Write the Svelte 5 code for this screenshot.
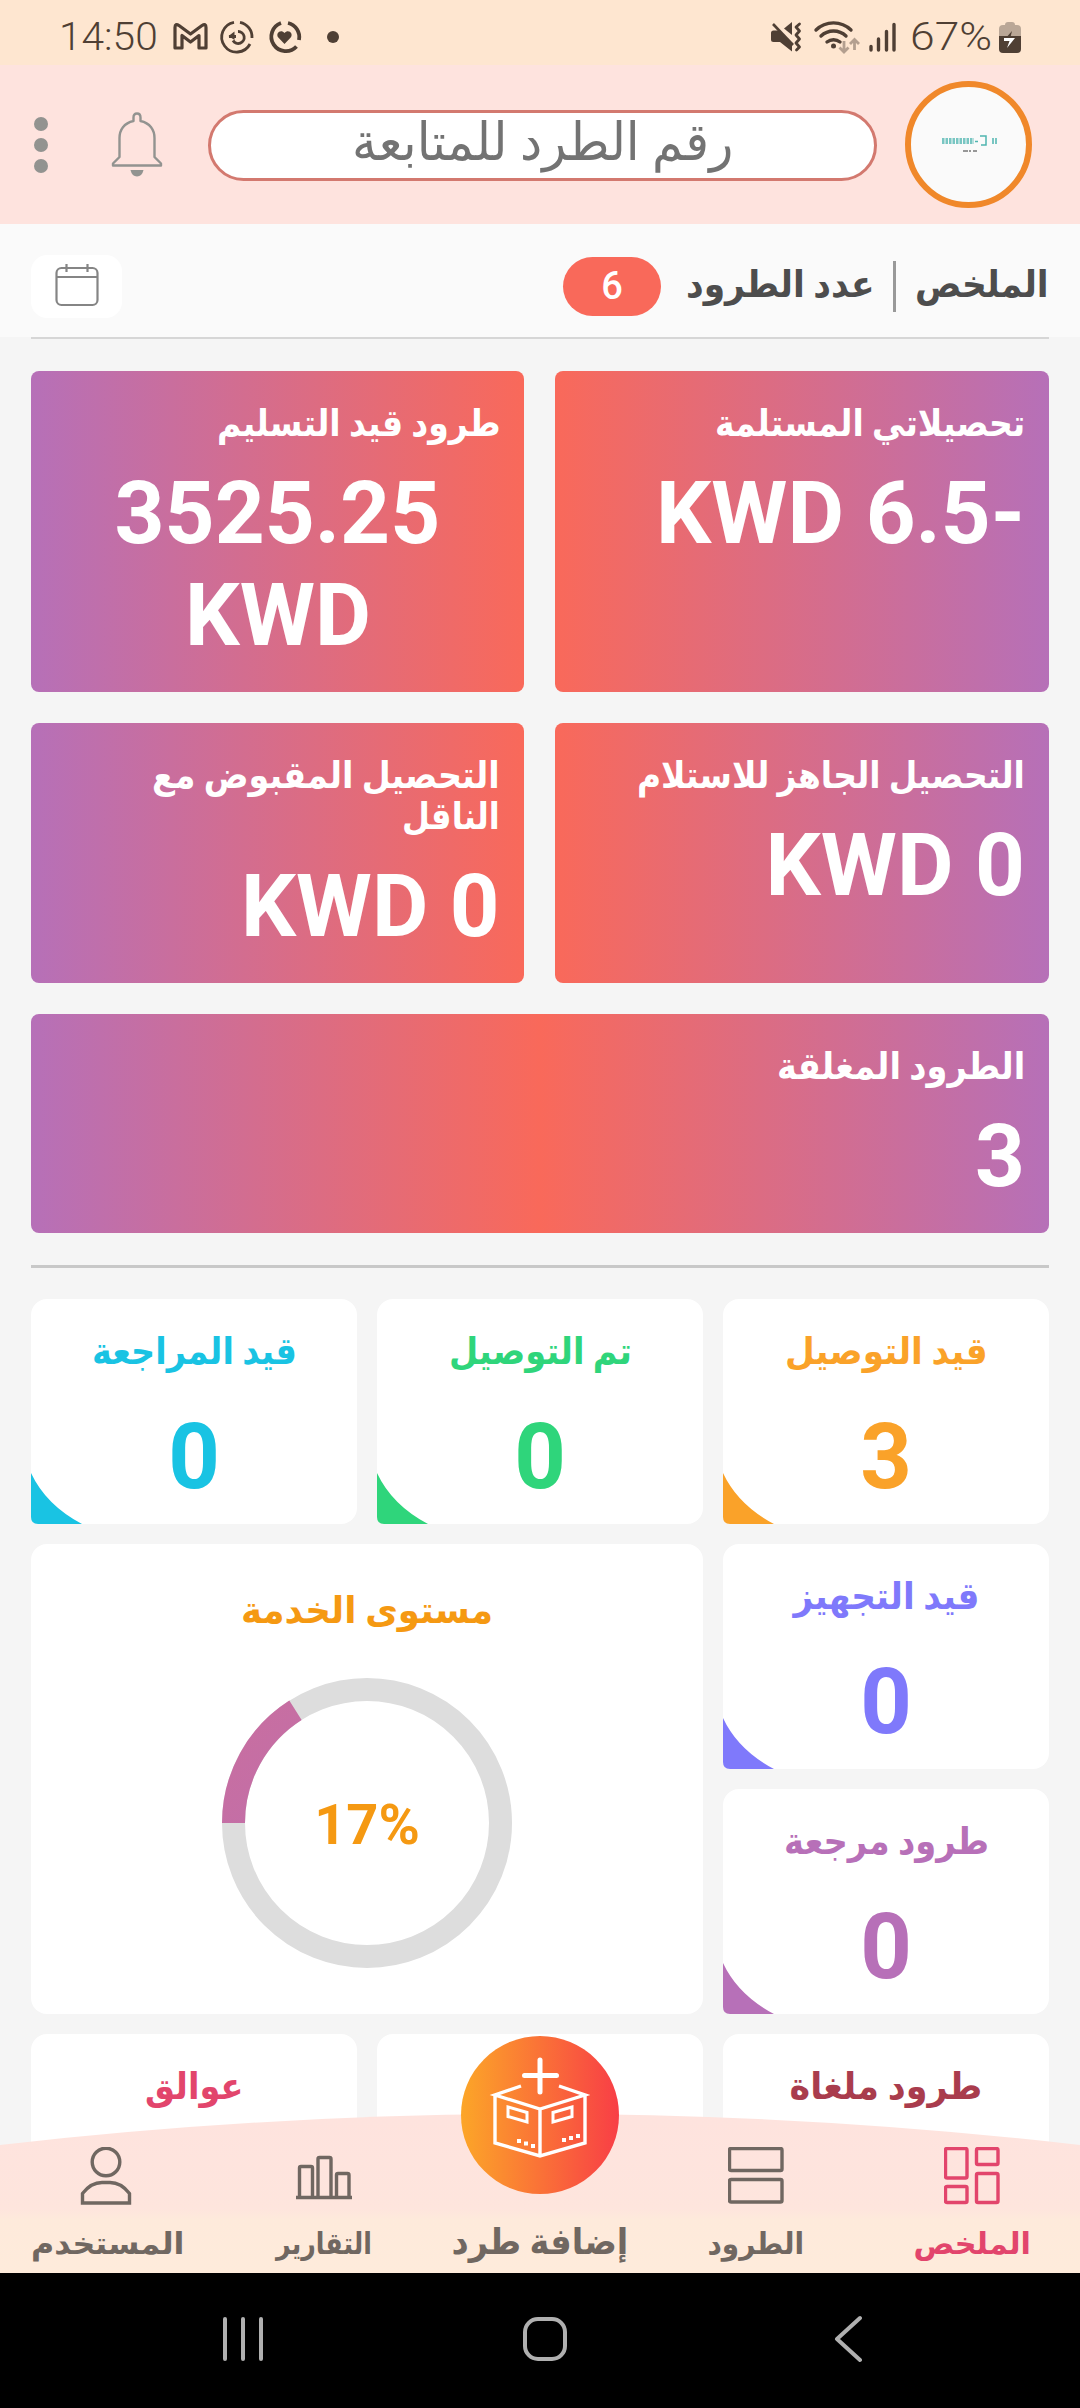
<script>
  const gradientCards = [
    { id: 'received', side: 'right', title: [['تحصيلاتي المستلمة', 310]], value: [['-6.5 KWD', 369]] },
    { id: 'delivering', side: 'left', title: [['طرود قيد التسليم', 284]], value: [['3525.25', 326], ['KWD', 186]] },
    { id: 'ready', side: 'right', title: [['التحصيل الجاهز للاستلام', 388]], value: [['0 KWD', 260]] },
    { id: 'carrier', side: 'left', title: [['التحصيل المقبوض مع', 348], ['الناقل', 98]], value: [['0 KWD', 259]] },
    { id: 'closed', side: 'full', title: [['الطرود المغلقة', 248]], value: [['3', 50]] }
  ];

  const statusCards = [
    { id: 'shipping', title: 'قيد التوصيل', width: 203, value: '3', color: '#faa229' },
    { id: 'delivered', title: 'تم التوصيل', width: 183, value: '0', color: '#2fd57b' },
    { id: 'review', title: 'قيد المراجعة', width: 205, value: '0', color: '#19c3e3' },
    { id: 'preparing', title: 'قيد التجهيز', width: 186, value: '0', color: '#7f79fb' },
    { id: 'returned', title: 'طرود مرجعة', width: 205, value: '0', color: '#b770b8' },
    { id: 'cancelled', title: 'طرود ملغاة', width: 193, value: '', color: '#a93c4d' },
    { id: 'empty', title: '', width: 0, value: '', color: '#ffffff' },
    { id: 'pending', title: 'عوالق', width: 98, value: '', color: '#e2456c' }
  ];

  const tabs = [
    { id: 'summary', label: 'الملخص', width: 117 },
    { id: 'parcels', label: 'الطرود', width: 96 },
    { id: 'add', label: 'إضافة طرد', width: 177 },
    { id: 'reports', label: 'التقارير', width: 96 },
    { id: 'user', label: 'المستخدم', width: 153 }
  ];

  let active = 'summary';
  const serviceLevel = 17;
  const arc = 16;

  // squeeze or stretch a label to its designed width
  function fit(node, width) {
    if (width) {
      node.style.transform = `scaleX(${width / node.offsetWidth})`;
    }
  }
</script>

<div class="screen">
  <div class="statusbar">
    <div class="status-left">
      <div class="clock"><span use:fit={99}>14:50</span></div>
      <svg width="170" height="40" viewBox="170 17 170 40" fill="none" stroke="#4f3f34">
        <path d="M175 48V27.500Q175 23 179 25.500L190.500 34L202 25.500Q206 23 206 27.500V48H199V35.500L190.500 42L182 35.500V48Z" stroke-width="3.200" stroke-linejoin="round" />
        <g stroke-width="2.800">
          <path d="M240 22.300A15 15 0 0 1 252 38" />
          <path d="M250 44A15 15 0 1 1 234 22.300" />
          <path d="M238 31.500A6 6 0 1 1 233 40.500M229 36.500H236" />
          <path d="M228.500 36L234.500 31.500V40Z" fill="#4f3f34" stroke="none" />
        </g>
        <g stroke-width="3.800">
          <path d="M288 23A14.500 14.500 0 0 1 299 40" />
          <path d="M296.500 46.500A14.500 14.500 0 1 1 281 23" />
        </g>
        <path d="M284.500 44L278.300 37.500C275 33 281 28.500 284.500 33C288 28.500 294 33 290.700 37.500Z" fill="#4f3f34" stroke="none" />
        <circle cx="333" cy="37" r="6" fill="#4f3f34" stroke="none" />
      </svg>
    </div>
    <div class="status-right">
      <svg width="132" height="40" viewBox="768 17 132 40" fill="none" stroke="#4f3f34">
        <path d="M772 33Q772 30.500 774.500 30.500H780L793 44V51.500L781 42H774.500Q772 42 772 39.500Z" fill="#4f3f34" stroke="none" />
        <path d="M793 22V35L785 28.500Z" fill="#4f3f34" stroke="none" />
        <path d="M774 24L794 45" stroke-width="2.600" />
        <path d="M800.500 24L797 27L800.500 31L797 35L800.500 39L797 43L800.500 47L797.500 50" stroke-width="2.800" stroke-linejoin="round" stroke-linecap="round" />
        <path d="M817 30A25 25 0 0 1 852 30M822 36A18 18 0 0 1 847 36M828 42A10.500 10.500 0 0 1 841 42" stroke-width="3.400" stroke-linecap="round" />
        <circle cx="834.500" cy="46" r="2.500" fill="#4f3f34" stroke="none" />
        <path d="M845 41V51M840.500 47.500L845 52L849.500 47.500M855.500 50V39.500M851 44L855.500 39.500L860 44" stroke="#b39f8f" stroke-width="2.800" />
        <path d="M872 46.500V50M879.500 39V50M887.500 31.500V50M895 24.500V50" stroke-width="3.400" stroke-linecap="round" />
      </svg>
      <div class="percent"><span use:fit={82}>67%</span></div>
      <svg width="22" height="32" viewBox="0 0 22 32">
        <path d="M6 3Q6 0 9 0H13Q16 0 16 3H18Q22 3 22 7V15H0V7Q0 3 4 3Z" fill="#baa797" />
        <path d="M0 14H22V27Q22 31 18 31H4Q0 31 0 27Z" fill="#4f3f34" />
        <path d="M13 9L6 17H11Z" fill="#4f3f34" />
        <path d="M5 16H16L8 26L10.500 19H5Z" fill="#fff" />
      </svg>
    </div>
  </div>

  <header>
    <button class="dots" aria-label="القائمة"><i></i><i></i><i></i></button>
    <button class="bell" aria-label="الإشعارات">
      <svg width="52" height="68" viewBox="0 0 52 68" fill="none" stroke="#929390" stroke-width="2.400" stroke-linejoin="round">
        <path d="M22.500 9V5.500Q22.500 1.500 26 1.500T29.500 5.500V9C39 11 43.500 18 43.500 26V45L50 51.500V53.500H2V51.500L8.500 45V26C8.500 18 13 11 22.500 9Z" />
        <path d="M19.500 58H32.500Q31 64.500 26 64.500T19.500 58Z" fill="#929390" stroke="none" />
      </svg>
    </button>
    <div class="search"><span use:fit={381}>رقم الطرد للمتابعة</span></div>
    <div class="avatar">
      <svg width="60" height="22" viewBox="0 0 60 22">
        <path d="M3 7H35" stroke="#4fb5b0" stroke-width="6" stroke-dasharray="2.500 1" opacity=".75" />
        <path d="M36 7.500H39M41 2H47V11H42M54 4V10M57 4V10" stroke="#4fb5b0" stroke-width="1.500" fill="none" />
        <path d="M24 17H38" stroke="#777" stroke-width="1.500" stroke-dasharray="5 1 2 2" />
      </svg>
    </div>
  </header>

  <div class="toolbar" dir="rtl">
    <div class="heading title"><span use:fit={134}>الملخص</span></div>
    <div class="separator"></div>
    <div class="heading count"><span use:fit={188}>عدد الطرود</span></div>
    <div class="badge">6</div>
    <button class="calendar" aria-label="التاريخ">
      <svg width="44" height="44" viewBox="0 0 44 44" fill="none" stroke="#858585" stroke-width="2.200">
        <rect x="1.500" y="4" width="41" height="37" rx="5" />
        <path d="M1.500 13H42.500M11.500 0V8M32.500 0V8" />
      </svg>
    </button>
  </div>
  <hr />

  <main dir="rtl">
    <section class="totals">
      {#each gradientCards as card (card.id)}
        <div class="total {card.side} {card.id}">
          <div class="total-title">
            {#each card.title as [text, width]}
              <div class="line"><span use:fit={width}>{text}</span></div>
            {/each}
          </div>
          <div class="total-value">
            {#each card.value as [text, width]}
              <div class="line"><span use:fit={width}>{text}</span></div>
            {/each}
          </div>
        </div>
      {/each}
    </section>

    <section class="statuses">
      {#each statusCards as card (card.id)}
        <div class="status {card.id}" style="color: {card.color}">
          <div class="status-title"><span use:fit={card.width}>{card.title}</span></div>
          <div class="status-value">{card.value}</div>
          <svg class="corner" width="51" height="51" viewBox="0 0 51 51">
            <path d="M0 0Q15 32 51 51H7Q0 51 0 44Z" fill="currentColor" />
          </svg>
        </div>
      {/each}
      <div class="service">
        <div class="service-title"><span use:fit={252}>مستوى الخدمة</span></div>
        <div class="donut">
          <svg width="290" height="290" viewBox="0 0 290 290" fill="none" stroke-width="23">
            <defs>
              <linearGradient id="arc" x1="0" y1="0" x2="1" y2="1">
                <stop offset="0" stop-color="#b670b8" />
                <stop offset="1" stop-color="#c96e9f" />
              </linearGradient>
            </defs>
            <circle cx="145" cy="145" r="133.500" stroke="#dddddd" />
            <circle cx="145" cy="145" r="133.500" stroke="url(#arc)" pathLength="100" stroke-dasharray="{arc} 100" transform="rotate(180 145 145)" />
          </svg>
          <span dir="ltr">{serviceLevel}%</span>
        </div>
      </div>
    </section>
  </main>

  <nav dir="rtl">
    <svg class="curve" width="1080" height="159" viewBox="0 0 1080 159">
      <defs>
        <linearGradient id="bar" x1="0" y1="0" x2="0" y2="1">
          <stop offset="0" stop-color="#fee3de" />
          <stop offset=".6" stop-color="#fee5dd" />
          <stop offset=".66" stop-color="#feeadb" />
          <stop offset="1" stop-color="#feebdb" />
        </linearGradient>
      </defs>
      <path d="M0 31Q540 -31 1080 31V159H0Z" fill="url(#bar)" />
    </svg>
    {#each tabs as tab (tab.id)}
      <button class="tab" class:add={tab.id === 'add'} class:active={active === tab.id} on:click={() => (active = tab.id)}>
        <span class="tab-icon">
          {#if tab.id === 'summary'}
            <svg width="56" height="58" viewBox="0 0 56 58">
              <rect x="1.500" y="1.500" width="21.500" height="29.500" rx="1.500" />
              <rect x="32.500" y="1.500" width="21.500" height="16" rx="1.500" />
              <rect x="1.500" y="39.500" width="21.500" height="16" rx="1.500" />
              <rect x="32.500" y="26.500" width="21.500" height="29" rx="1.500" />
            </svg>
          {:else if tab.id === 'parcels'}
            <svg width="56" height="58" viewBox="0 0 56 58">
              <rect x="1.500" y="1.500" width="52.500" height="22" rx="1.500" />
              <rect x="1.500" y="32.500" width="52.500" height="22.500" rx="1.500" />
            </svg>
          {:else if tab.id === 'reports'}
            <svg width="56" height="58" viewBox="0 0 56 58">
              <path d="M0 50.500H56M3.500 50V21Q3.500 19.500 5 19.500H15Q16.500 19.500 16.500 21V50M22 50V12Q22 10.500 23.500 10.500H33.500Q35 10.500 35 12V50M40.500 50V28Q40.500 26.500 42 26.500H51.500Q53 26.500 53 28V50" />
            </svg>
          {:else if tab.id === 'user'}
            <svg width="56" height="58" viewBox="0 0 56 58">
              <circle cx="26" cy="15" r="13.800" />
              <path d="M2.500 56V46.500Q11 35.500 22 35.500H30Q41 35.500 49.500 46.500V56Z" />
            </svg>
          {/if}
        </span>
        <span class="tab-label"><span use:fit={tab.width}>{tab.label}</span></span>
      </button>
    {/each}
    <div class="fab">
      <svg width="158" height="158" viewBox="0 0 158 158" fill="none" stroke="#fff">
        <path d="M79 24V56M63.500 39.500H95.500" stroke-width="5" stroke-linecap="round" />
        <path d="M60 50L34 59L79 73L124 59L98 50M34 59V107L79 120L124 107V59M79 73V120" stroke-width="3.400" />
        <path d="M47 71L66 76.500V86L47 80.500ZM111 71L92 76.500V86L111 80.500Z" stroke-width="3" />
        <path d="M56 105H60M63 107.500H67M70 110H74M101 104H105M108 102H112M115 100H119" stroke-width="4" />
      </svg>
    </div>
  </nav>

  <div class="android">
    <svg width="40" height="44" viewBox="0 0 40 44"><path d="M2 2V42M20 2V42M38 2V42" /></svg>
    <svg class="home" width="44" height="44" viewBox="0 0 44 44"><rect x="2" y="2" width="40" height="40" rx="13" /></svg>
    <svg width="28" height="48" viewBox="0 0 28 48"><path d="M26 3L3 24L26 45" /></svg>
  </div>
</div>

<style>
  :global(body) {
    background: #000;
  }

  .screen {
    position: relative;
    display: flex;
    flex-direction: column;
    width: 1080px;
    height: 2408px;
    overflow: hidden;
    background: #f5f5f5;
    font-family: Roboto, "DejaVu Sans", sans-serif;
  }

  button {
    padding: 0;
    border: 0;
    background: none;
    font: inherit;
    color: inherit;
  }

  svg {
    display: block;
    flex: none;
  }

  span {
    white-space: nowrap;
  }

  .statusbar {
    display: flex;
    justify-content: space-between;
    box-sizing: border-box;
    height: 65px;
    padding: 17px 59px 0 59px;
    background: #fee6d0;
    color: #4f3f34;
    font-size: 39px;
    font-weight: 300;
    line-height: 41px;
  }

  .status-left,
  .status-right {
    display: flex;
    align-items: flex-start;
  }

  .clock {
    display: flex;
    width: 99px;
    margin-right: 12px;
  }

  .clock span {
    transform-origin: left;
  }

  .percent {
    display: flex;
    justify-content: center;
    width: 82px;
    margin: 0 7px 0 11px;
  }

  .status-right svg:last-child {
    margin-top: 5px;
  }

  header {
    display: flex;
    align-items: center;
    box-sizing: border-box;
    height: 159px;
    padding: 0 48px 0 34px;
    background: #fee3de;
  }

  .dots {
    display: flex;
    flex-direction: column;
    gap: 7px;
    margin-right: 63px;
  }

  .dots i {
    width: 14px;
    height: 14px;
    border-radius: 50%;
    background: #929390;
  }

  .bell {
    margin: 3px 45px 0 0;
  }

  .search {
    display: flex;
    justify-content: center;
    box-sizing: border-box;
    width: 669px;
    height: 71px;
    margin-top: 1px;
    border: 3px solid #d3796f;
    border-radius: 36px;
    background: #fff;
    color: #737373;
    font-size: 52px;
    line-height: 60px;
  }

  .avatar {
    display: flex;
    align-items: center;
    justify-content: center;
    box-sizing: border-box;
    width: 127px;
    height: 127px;
    margin-left: auto;
    border: 6px solid #f0882a;
    border-radius: 50%;
    background: #fafafa;
  }

  .toolbar {
    display: flex;
    align-items: center;
    box-sizing: border-box;
    height: 113px;
    padding: 11px 31px 0;
    background: #fafafa;
    color: #4d4d4d;
  }

  hr {
    box-sizing: border-box;
    width: 1018px;
    height: 2px;
    margin: 0 auto;
    border: 0;
    background: #d6d6d6;
  }

  .heading {
    display: flex;
    font-size: 37px;
    font-weight: bold;
    line-height: 48px;
    margin-bottom: 3px;
  }

  .heading span {
    transform-origin: right;
  }

  .title {
    width: 134px;
  }

  .count {
    width: 187px;
  }

  .separator {
    width: 3px;
    height: 51px;
    margin: 0 19px;
    background: #999;
  }

  .badge {
    width: 98px;
    height: 59px;
    margin-right: 26px;
    border-radius: 30px;
    background: #f9695a;
    color: #fff;
    font-size: 38px;
    font-weight: 500;
    line-height: 59px;
    text-align: center;
  }

  .calendar {
    display: flex;
    align-items: center;
    justify-content: center;
    width: 91px;
    height: 63px;
    margin-right: auto;
    border-radius: 16px;
    background: #fff;
  }

  main {
    padding: 32px 31px 0;
  }

  .totals {
    display: grid;
    grid-template-columns: 494px 493px;
    gap: 31px;
    padding-bottom: 32px;
    border-bottom: 3px solid #c8c8c8;
  }

  .total {
    box-sizing: border-box;
    padding: 32px 24px 26px;
    border-radius: 8px;
    background: linear-gradient(to right, #f9695a, #b670b8);
    color: #fff;
  }

  .total.left {
    background: linear-gradient(to right, #b670b8, #f9695a);
  }

  .total.full {
    grid-column: span 2;
    background: linear-gradient(to right, #b670b8, #f9695a, #b670b8);
  }

  .line {
    display: flex;
  }

  .line span {
    transform-origin: right;
  }

  .total-title {
    font-size: 37px;
    font-weight: bold;
    line-height: 41px;
  }

  .total-value {
    margin-top: 18px;
    font-size: 87px;
    font-weight: bold;
    line-height: 102px;
  }

  .delivering .total-value .line {
    justify-content: center;
  }

  .delivering .total-value span {
    transform-origin: center;
  }

  .statuses {
    display: grid;
    grid-template-columns: repeat(3, 1fr);
    grid-auto-rows: 225px;
    gap: 20px;
    padding-top: 31px;
  }

  .status {
    position: relative;
    box-sizing: border-box;
    padding-top: 32px;
    border-radius: 16px;
    background: #fff;
  }

  .status-title,
  .service-title {
    display: flex;
    justify-content: center;
    height: 42px;
    font-size: 37px;
    font-weight: bold;
    line-height: 42px;
  }

  .status-value {
    margin-top: 33px;
    font-size: 90px;
    font-weight: bold;
    line-height: 104px;
    text-align: center;
  }

  .corner {
    position: absolute;
    left: 0;
    bottom: 0;
  }

  .preparing,
  .returned {
    grid-column: 1;
  }

  .service {
    grid-column: 2 / span 2;
    grid-row: 2 / span 2;
    box-sizing: border-box;
    padding-top: 46px;
    border-radius: 16px;
    background: #fff;
    color: #f59912;
  }

  .donut {
    position: relative;
    width: 290px;
    margin: 46px auto 0;
  }

  .donut span {
    position: absolute;
    inset: 0;
    font-size: 56px;
    font-weight: bold;
    line-height: 294px;
    text-align: center;
  }

  nav {
    position: absolute;
    left: 0;
    bottom: 135px;
    display: grid;
    grid-template-columns: repeat(5, 216px);
    width: 1080px;
    height: 159px;
    color: #706761;
  }

  .curve {
    position: absolute;
    inset: 0;
  }

  .tab {
    position: relative;
    display: flex;
    flex-direction: column;
    align-items: center;
    padding-top: 33px;
  }

  .tab.active {
    color: #e2456c;
  }

  .tab-icon {
    width: 56px;
    height: 58px;
  }

  .tab-icon svg {
    fill: none;
    stroke: currentColor;
    stroke-width: 3.4;
  }

  .tab-label {
    display: flex;
    justify-content: center;
    width: 216px;
    margin-top: 19px;
    font-size: 30px;
    font-weight: bold;
    line-height: 40px;
  }

  .tab.add .tab-label {
    font-size: 36px;
    line-height: 36px;
  }

  .fab {
    position: absolute;
    top: -78px;
    left: 461px;
    width: 158px;
    height: 158px;
    border-radius: 50%;
    background: linear-gradient(to right, #fca628, #f83e46);
  }

  .android {
    position: relative;
    display: flex;
    align-items: center;
    justify-content: space-between;
    box-sizing: border-box;
    height: 135px;
    margin-top: auto;
    padding: 0 218px 4px 223px;
    background: #000;
  }

  .home {
    margin-right: 8px;
  }

  .android svg {
    fill: none;
    stroke: #b0b0b0;
    stroke-width: 4;
    stroke-linecap: round;
    stroke-linejoin: round;
  }
</style>
